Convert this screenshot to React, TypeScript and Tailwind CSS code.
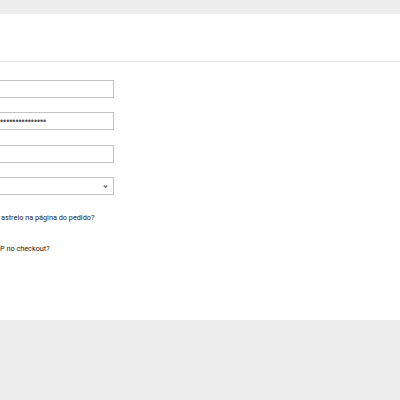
export default function App() {
  return (
    <div className="min-h-[400px] bg-[#ededed] pt-[14px]" style={{ fontFamily: "Roboto, 'Liberation Sans', Arial, sans-serif" }}>
      <div className="bg-white h-[306px] overflow-hidden">
        <div className="h-[48px] border-b border-[#e6e6e6]" />

        <div className="flex flex-col pt-[18px]">
          <div className="w-[114px] h-[18px] border border-l-0 border-[#c3c3c3] bg-white" />

          <div className="w-[114px] h-[18px] mt-[14px] border border-l-0 border-[#c3c3c3] bg-white flex items-center">
            <span className="text-[8.8px] leading-none text-[#555] ml-[0px]" style={{ fontFamily: "'Liberation Sans', Arial, sans-serif" }}>•••••••••••••••</span>
          </div>

          <div className="w-[114px] h-[18px] mt-[15px] border border-l-0 border-[#c3c3c3] bg-white" />

          <div className="w-[114px] h-[18px] mt-[14px] border border-l-0 border-[#c3c3c3] bg-white flex items-center justify-end pr-[5px]">
            <svg width="5" height="3" viewBox="0 0 5 3" fill="none">
              <path d="M0.7 0.5 L2.5 2.3 L4.3 0.5" stroke="#666" strokeWidth="1.1" />
            </svg>
          </div>

          <p className="mt-[18px] ml-[1px] text-[7.3px] leading-[10px] text-[#222] whitespace-nowrap">astreio na página do pedido?</p>
          <p className="mt-[21px] text-[7.3px] leading-[10px] text-[#222] whitespace-nowrap">P no checkout?</p>
        </div>
      </div>
    </div>
  )
}
